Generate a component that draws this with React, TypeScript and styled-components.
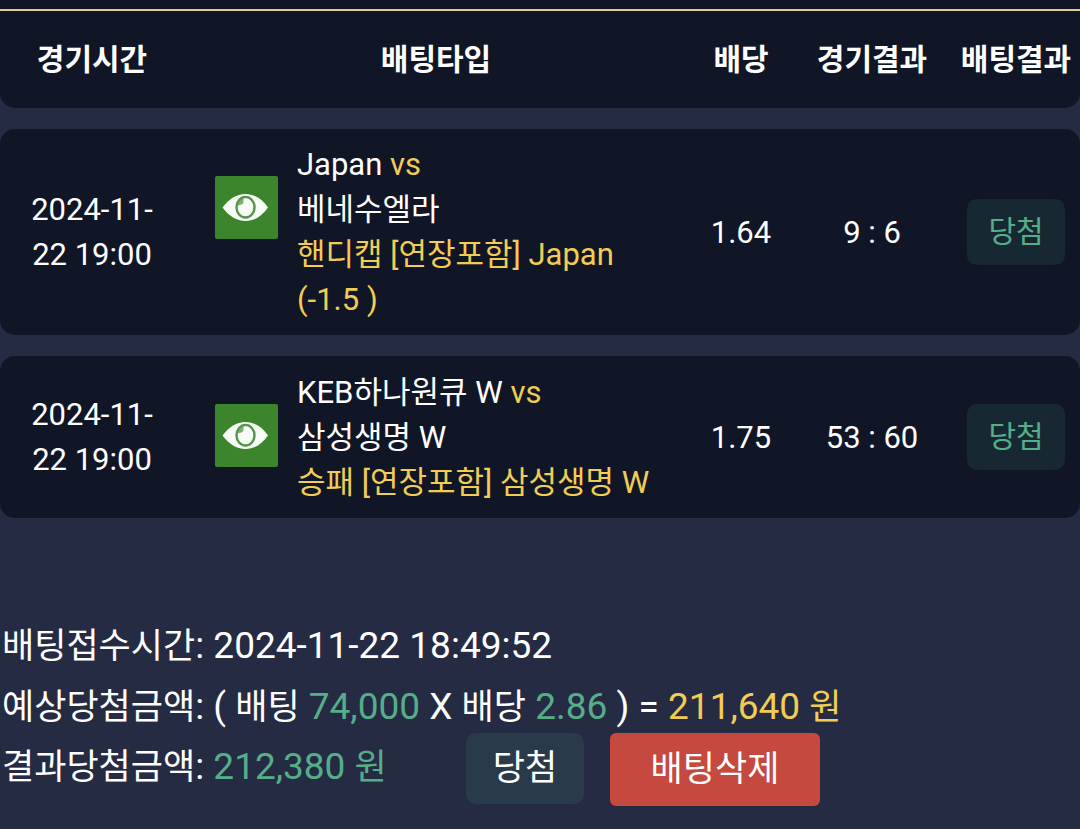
import React from "react";
import styled, { createGlobalStyle } from "styled-components";

const GlobalStyle = createGlobalStyle`
  * { box-sizing: border-box; }
  body {
    margin: 0;
    background: #262b44;
    color: #fff;
    font-family: Roboto, "Noto Sans CJK KR", sans-serif;
    font-size: 30px;
    line-height: 45px;
  }
`;

const Page = styled.main`
  min-height: 100vh;
  background: #262b44;
`;

const TopBar = styled.div`
  height: 11px;
  background: #111627;
  border-bottom: 2px solid #e2cb7a;
`;

const BetTable = styled.table`
  width: 100%;
  table-layout: fixed;
  border-collapse: separate;
  border-spacing: 0 21px;
  margin-top: -21px;
`;

const Col = styled.col<{ $width?: number }>`
  width: ${(p) => (p.$width ? `${p.$width}px` : "auto")};
`;

const HeadCell = styled.th`
  padding: 26px 0;
  background: #111627;
  font-weight: 700;
  white-space: nowrap;
  &:first-child { border-bottom-left-radius: 15px; }
  &:last-child {
    padding-left: 2px;
    border-bottom-right-radius: 15px;
  }
`;

const Cell = styled.td`
  height: 162px;
  padding: 13px 0;
  background: #111627;
  font-size: 31px;
  text-align: center;
  vertical-align: middle;
  &:first-child {
    padding: 13px 24px;
    border-radius: 15px 0 0 15px;
  }
  &:last-child {
    padding-left: 2px;
    border-radius: 0 15px 15px 0;
  }
`;

const Match = styled.div`
  display: flex;
  gap: 19px;
  align-items: flex-start;
  padding: 0 20px 0 31px;
  text-align: left;
`;

const EyeButton = styled.button`
  flex: none;
  display: block;
  width: 63px;
  height: 63px;
  margin-top: 34px;
  padding: 0;
  border: 0;
  border-radius: 2px;
  background: #3c852c;
  svg { display: block; width: 63px; height: 63px; }
`;

const Line = styled.div``;

const Hangul = styled.span`
  font-size: 35px;
`;

const Accent = styled.span<{ $tone: "gold" | "green" }>`
  color: ${(p) => (p.$tone === "gold" ? "#f1cd54" : "#56ae89")};
`;

const ResultBadge = styled.span`
  display: inline-block;
  padding: 10px 21px 11px;
  border-radius: 10px;
  background: #182833;
  color: #56ae89;
  font-size: 30px;
  vertical-align: middle;
`;

const Summary = styled.section`
  padding: 77px 0 23px 2px;
  font-size: 37px;
  line-height: 60px;
`;

const SummaryRow = styled.div`
  display: flex;
  align-items: flex-start;
  margin-top: -5px;
`;

const ResultAmount = styled.div`
  width: 464px;
  line-height: 67px;
`;

const WinTag = styled.span`
  width: 118px;
  height: 71px;
  border-radius: 10px;
  background: #293b4b;
  line-height: 70px;
  text-align: center;
`;

const DeleteButton = styled.button`
  width: 210px;
  height: 73px;
  margin-left: 26px;
  padding: 0;
  border: 0;
  border-radius: 6px;
  background: #c5493e;
  color: #fff;
  font: inherit;
`;

/* Hangul is set slightly smaller than the Latin letters and digits beside it. */
const Mixed = ({ text }: { text: string }) => (
  <>
    {text.split(/([가-힣]+)/).map((part, i) =>
      i % 2 ? <Hangul key={i}>{part}</Hangul> : part
    )}
  </>
);

const Eye = () => (
  <svg viewBox="0 0 63 63" aria-hidden="true">
    <path d="M7.500 31.500C14 23 21.500 18 30.500 18S47 23 53 31.500C47 40 39.500 45 30.500 45S14 40 7.500 31.500Z" fill="#f8fcf6" />
    <ellipse cx="30.500" cy="31.200" rx="9" ry="10.300" fill="#f8fcf6" stroke="#55944a" strokeWidth="2.400" />
    <path d="M22.500 29.500C23 25.500 25.500 22.500 28.500 22V25.500C28.500 27.500 27.500 28.500 25.500 28.800Z" fill="#55944a" opacity=".75" />
  </svg>
);

type Bet = {
  date: string;
  home: string;
  away: string;
  pick: string;
  odds: string;
  score: string;
};

const bets: Bet[] = [
  {
    date: "2024-11-22 19:00",
    home: "Japan",
    away: "베네수엘라",
    pick: "핸디캡 [연장포함] Japan (-1.5 )",
    odds: "1.64",
    score: "9 : 6",
  },
  {
    date: "2024-11-22 19:00",
    home: "KEB하나원큐 W",
    away: "삼성생명 W",
    pick: "승패 [연장포함] 삼성생명 W",
    odds: "1.75",
    score: "53 : 60",
  },
];

export default function App() {
  return (
    <Page>
      <GlobalStyle />
      <TopBar />
      <BetTable>
        <colgroup>
          <Col $width={184} />
          <Col />
          <Col $width={106} />
          <Col $width={156} />
          <Col $width={130} />
        </colgroup>
        <thead>
          <tr>
            {["경기시간", "배팅타입", "배당", "경기결과", "배팅결과"].map((h) => (
              <HeadCell key={h} scope="col">{h}</HeadCell>
            ))}
          </tr>
        </thead>
        <tbody>
          {bets.map((b) => (
            <tr key={b.home}>
              <Cell>{b.date}</Cell>
              <Cell>
                <Match>
                  <EyeButton type="button" aria-label="경기 보기"><Eye /></EyeButton>
                  <div>
                    <Line>{b.home} <Accent $tone="gold">vs</Accent></Line>
                    <Line>{b.away}</Line>
                    <Line><Accent $tone="gold">{b.pick}</Accent></Line>
                  </div>
                </Match>
              </Cell>
              <Cell>{b.odds}</Cell>
              <Cell>{b.score}</Cell>
              <Cell><ResultBadge>당첨</ResultBadge></Cell>
            </tr>
          ))}
        </tbody>
      </BetTable>
      <Summary>
        <div><Mixed text="배팅접수시간: 2024-11-22 18:49:52" /></div>
        <div>
          <Mixed text="예상당첨금액: ( 배팅 " />
          <Accent $tone="green">74,000</Accent>
          <Mixed text=" X 배당 " />
          <Accent $tone="green">2.86</Accent> ) ={" "}
          <Accent $tone="gold"><Mixed text="211,640 원" /></Accent>
        </div>
        <SummaryRow>
          <ResultAmount>
            <Mixed text="결과당첨금액: " />
            <Accent $tone="green"><Mixed text="212,380 원" /></Accent>
          </ResultAmount>
          <WinTag><Mixed text="당첨" /></WinTag>
          <DeleteButton type="button"><Mixed text="배팅삭제" /></DeleteButton>
        </SummaryRow>
      </Summary>
    </Page>
  );
}
